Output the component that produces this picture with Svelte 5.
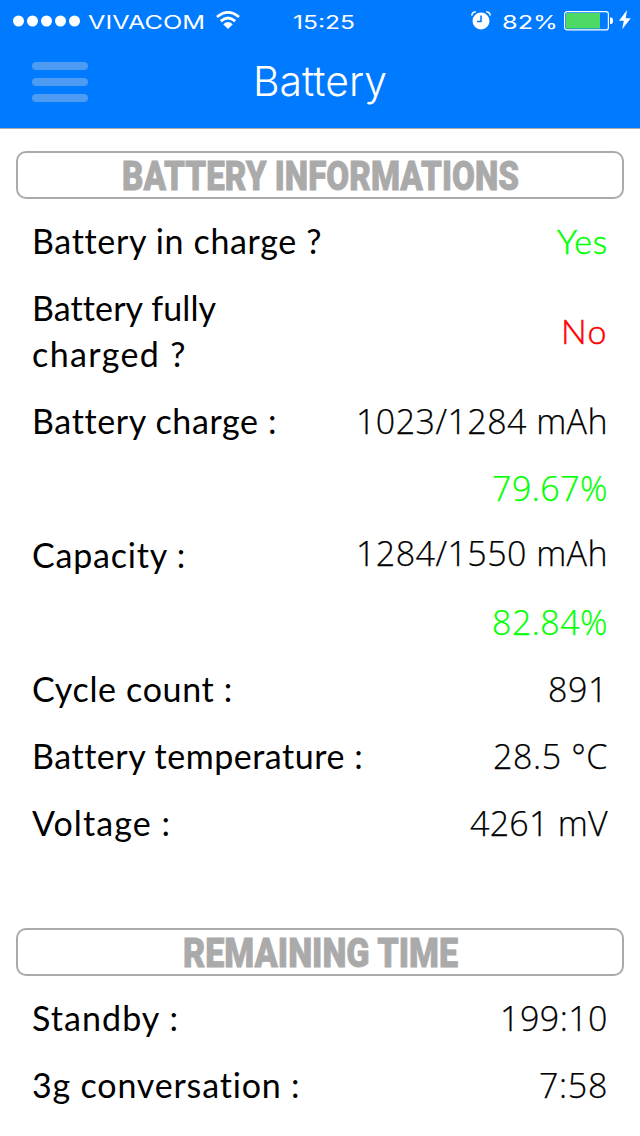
<script lang="ts">
  /**
   * Battery screen: status bar, title bar and the grouped battery readings.
   */

  type Label = { text: string; width: number };
  type Row = {
    label: Label[];
    value: string;
    width: number;
    tone?: 'good' | 'bad';
    word?: boolean;
    raised?: boolean;
  };
  type Section = { title: string; width: number; rows: Row[] };

  const sections: Section[] = [
    {
      title: 'BATTERY INFORMATIONS',
      width: 397,
      rows: [
        { label: [{ text: 'Battery in charge ?', width: 289 }], value: 'Yes', width: 51, tone: 'good', word: true },
        {
          label: [
            { text: 'Battery fully', width: 183 },
            { text: 'charged ?', width: 155 },
          ],
          value: 'No',
          width: 47,
          tone: 'bad',
          word: true,
        },
        { label: [{ text: 'Battery charge :', width: 244 }], value: '1023/1284 mAh', width: 252 },
        { label: [], value: '79.67%', width: 116, tone: 'good' },
        { label: [{ text: 'Capacity :', width: 154 }], value: '1284/1550 mAh', width: 252, raised: true },
        { label: [], value: '82.84%', width: 116, tone: 'good' },
        { label: [{ text: 'Cycle count :', width: 201 }], value: '891', width: 60 },
        { label: [{ text: 'Battery temperature :', width: 330 }], value: '28.5 °C', width: 115 },
        { label: [{ text: 'Voltage :', width: 139 }], value: '4261 mV', width: 138 },
      ],
    },
    {
      title: 'REMAINING TIME',
      width: 275,
      rows: [
        { label: [{ text: 'Standby :', width: 147 }], value: '199:10', width: 108 },
        { label: [{ text: '3g conversation :', width: 269 }], value: '7:58', width: 69 },
      ],
    },
  ];

  // Track the letters so that the text takes the given width
  function track(node: HTMLElement, width: number) {
    const natural = node.getBoundingClientRect().width;
    const count = node.textContent?.length || 1;
    node.style.letterSpacing = `${(width - natural) / count}px`;
  }

  // Widen or condense the glyphs themselves
  function stretch(node: HTMLElement, width: number) {
    const natural = node.getBoundingClientRect().width;
    node.style.transform = `scaleX(${width / natural})`;
    node.style.marginRight = `${width - natural}px`;
  }
</script>

<div class="screen">
  <header>
    <div class="status-bar">
      <div class="carrier">
        <svg class="signal" width="68" height="12" viewBox="0 0 68 12">
          {#each [0, 1, 2, 3, 4] as dot}
            <circle cx={5.5 + dot * 14} cy="6" r="5.5" />
          {/each}
        </svg>
        <span class="status-text" use:stretch={117}>VIVACOM</span>
        <svg class="wifi" width="24" height="18" viewBox="0 0 24 18">
          <path d="M1 6 Q12 -3.2 23 6" />
          <path d="M4.8 10.1 Q12 3.8 19.2 10.1" />
          <path class="solid" d="M7.2 13.2 Q12 8.8 16.8 13.2 L12 18Z" />
        </svg>
      </div>
      <div class="clock"><span class="status-text" use:stretch={62}>15:25</span></div>
      <div class="power">
        <svg class="alarm" width="20" height="19" viewBox="0 0 20 19">
          <circle cx="10" cy="10" r="8.5" />
          <path class="bell" d="M.8 4.6Q1 1.2 4.8.8M19.2 4.6Q19 1.2 15.2.8" />
          <path class="hands" d="M10 4.5V10.5H6" />
        </svg>
        <span class="status-text" use:stretch={56}>82%</span>
        <svg class="battery" width="50" height="20" viewBox="0 0 50 20">
          <rect class="case" x=".6" y=".6" width="43.8" height="18.3" rx="2.5" />
          <rect class="charge" x="2" y="2" width="34" height="15.5" />
          <path class="tip" d="M46 6.5H47Q49 6.5 49 9.8Q49 13 47 13H46Z" />
        </svg>
        <svg class="bolt" width="12" height="20" viewBox="0 0 12 20">
          <path d="M8 0 0 10.8H4.8L3.2 19.2 11.8 8.2H6.8Z" />
        </svg>
      </div>
    </div>
    <div class="title-bar">
      <div class="menu">
        <span></span>
        <span></span>
        <span></span>
      </div>
      <h1><span use:stretch={134}>Battery</span></h1>
    </div>
  </header>

  <main>
    {#each sections as section}
      <section>
        <h2><span use:stretch={section.width}>{section.title}</span></h2>
        {#each section.rows as row}
          <div class="row">
            <div class="label">
              {#each row.label as line}
                <div><span use:track={line.width}>{line.text}</span></div>
              {/each}
            </div>
            <div
              class="value"
              class:good={row.tone === 'good'}
              class:bad={row.tone === 'bad'}
              class:word={row.word}
              class:raised={row.raised}
            >
              <span use:track={row.width}>{row.value}</span>
            </div>
          </div>
        {/each}
      </section>
    {/each}
  </main>
</div>

<style>
  :global(body) {
    margin: 0;
    background: #fff;
  }

  .screen {
    width: 640px;
    height: 1136px;
    overflow: hidden;
    background: #fff;
    color: #000;
  }

  span {
    display: inline-block;
    white-space: nowrap;
    transform-origin: left center;
  }

  header {
    box-sizing: border-box;
    height: 129px;
    background: #007aff;
    border-bottom: 1px solid #aaa;
    color: #fff;
  }

  .status-bar {
    display: grid;
    grid-template-columns: 293px 1fr auto;
    height: 40px;
    padding: 0 9px 0 13px;
  }

  .status-bar svg {
    flex: none;
    fill: #fff;
  }

  .carrier,
  .clock,
  .power {
    display: flex;
    align-items: flex-start;
  }

  .clock {
    margin-left: -13px;
  }

  .status-text {
    margin-top: 11px;
    font: 400 18px/24px Inter, sans-serif;
  }

  .signal {
    margin: 15px 7px 0 0;
  }

  .wifi {
    margin: 11px 0 0 11px;
  }

  .wifi path {
    fill: none;
    stroke: #fff;
    stroke-width: 2.8;
  }

  .wifi .solid {
    fill: #fff;
    stroke: none;
  }

  .alarm {
    margin: 11px 11px 0 0;
  }

  .alarm .bell {
    fill: none;
    stroke: #fff;
    stroke-width: 1.5;
  }

  .alarm .hands {
    fill: none;
    stroke: #007aff;
    stroke-width: 1.6;
  }

  .battery {
    margin: 11px 5px 0 6px;
  }

  .battery .case {
    fill: none;
    stroke: #fff;
    stroke-width: 1.2;
  }

  .battery .charge {
    fill: #4cd964;
  }

  .bolt {
    margin-top: 10px;
  }

  .title-bar {
    display: grid;
    grid-template-columns: 56px 1fr 56px;
    padding: 0 32px;
    height: 88px;
  }

  .menu {
    display: flex;
    flex-direction: column;
    gap: 8px;
    padding-top: 22px;
  }

  .menu span {
    height: 8px;
    border-radius: 4px;
    background: #4d9bf2;
  }

  h1 {
    margin: 0;
    padding-top: 16px;
    text-align: center;
    font: 300 41px/50px Inter, sans-serif;
  }

  main {
    padding: 22px 16px 0;
  }

  section {
    margin-bottom: 70px;
  }

  h2 {
    box-sizing: border-box;
    height: 48px;
    margin: 0 0 10px;
    border: 2px solid #aaa;
    border-radius: 10px;
    color: #aaa;
    text-align: center;
    font: 900 41px/46px Roboto, sans-serif;
    -webkit-text-stroke: 0.8px #aaa;
  }

  .row {
    display: flex;
    justify-content: space-between;
    align-items: center;
    box-sizing: border-box;
    min-height: 67px;
    padding: 8.5px 16px 12.5px 16px;
    line-height: 46px;
  }

  .label {
    font-family: Lato, sans-serif;
    font-size: 34px;
  }

  .value {
    font-family: 'Open Sans', sans-serif;
    font-size: 34px;
    font-weight: 300;
    -webkit-text-stroke: 0.25px currentColor;
  }

  .value.word {
    font-family: Lato, sans-serif;
    -webkit-text-stroke-width: 0.5px;
  }

  .value.raised {
    margin-top: -4px;
  }

  .good {
    color: #0f0;
  }

  .bad {
    color: #f00;
  }
</style>
